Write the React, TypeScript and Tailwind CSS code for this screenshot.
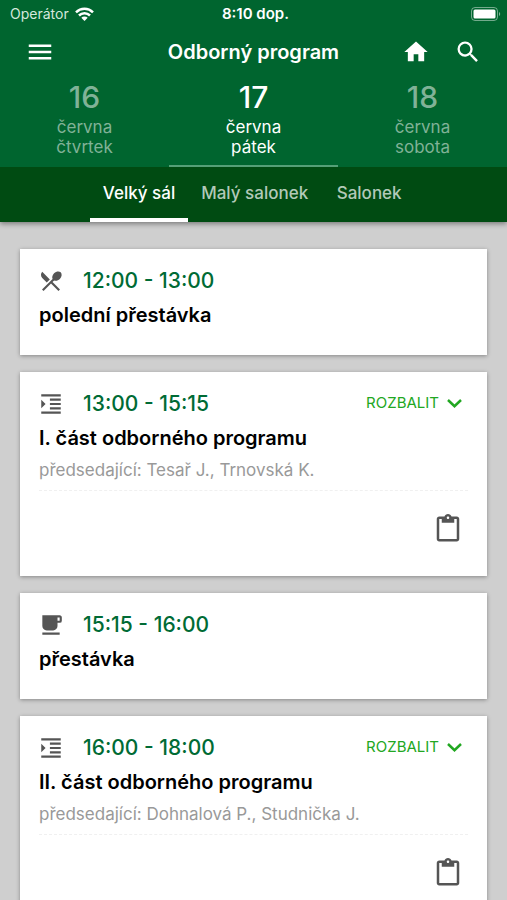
import { useState } from "react";
import type { IconType } from "react-icons";
import {
  MdContentPaste,
  MdFormatIndentIncrease,
  MdFreeBreakfast,
  MdHome,
  MdMenu,
  MdRestaurantMenu,
  MdSearch,
} from "react-icons/md";

type Session = {
  time: string;
  title: string;
  icon: IconType;
  chair?: string;
};

const days = [
  { date: "16", month: "června", weekday: "čtvrtek" },
  { date: "17", month: "června", weekday: "pátek" },
  { date: "18", month: "června", weekday: "sobota" },
];

const halls = ["Velký sál", "Malý salonek", "Salonek"];

const sessions: Session[] = [
  { time: "12:00 - 13:00", title: "polední přestávka", icon: MdRestaurantMenu },
  {
    time: "13:00 - 15:15",
    title: "I. část odborného programu",
    icon: MdFormatIndentIncrease,
    chair: "předsedající: Tesař J., Trnovská K.",
  },
  { time: "15:15 - 16:00", title: "přestávka", icon: MdFreeBreakfast },
  {
    time: "16:00 - 18:00",
    title: "II. část odborného programu",
    icon: MdFormatIndentIncrease,
    chair: "předsedající: Dohnalová P., Studnička J.",
  },
];

function StatusBar() {
  return (
    <div className="grid h-7 grid-cols-3 items-center pr-1.5 pl-2.5">
      <div className="flex items-center gap-1.5 text-sm text-[#d5e8dc]">
        <span>Operátor</span>
        <svg width="19" height="14" viewBox="0 0 19 14" aria-hidden="true">
          <g fill="none" stroke="#fff" strokeWidth="2.5">
            <path d="M1 5.3a12.2 12.2 0 0 1 17 0" />
            <path d="M4 8.5a7.8 7.8 0 0 1 11 0" />
          </g>
          <path d="M9.5 14 6.3 10.8a4.6 4.6 0 0 1 6.4 0Z" fill="#fff" />
        </svg>
      </div>
      <div className="text-center text-[15px] font-semibold">8:10 dop.</div>
      <svg className="justify-self-end" width="30" height="14" viewBox="0 0 30 14" aria-hidden="true">
        <rect x="0.5" y="0.5" width="26" height="13" rx="3.5" fill="none" stroke="#fff" strokeOpacity="0.45" />
        <rect x="2.5" y="2.5" width="22" height="9" rx="1.5" fill="#fff" />
        <path d="M28 5c1.6.7 1.6 3.3 0 4Z" fill="#fff" fillOpacity="0.5" />
      </svg>
    </div>
  );
}

function SessionCard({ session }: { session: Session }) {
  const Icon = session.icon;
  return (
    <article className="bg-white px-[19px] pt-4 shadow-[0_1px_4px_rgba(0,0,0,0.35)]">
      <div className="flex h-8 items-center">
        <Icon className="-ml-px size-[26px] text-[#555]" />
        <p className="ml-[19px] text-[21px] font-medium text-[#006b35]">{session.time}</p>
        {session.chair && (
          <button className="mr-1.5 ml-auto flex items-center gap-2 pb-0.5 text-[15px] text-[#22a722]">
            ROZBALIT
            <svg width="15" height="9" viewBox="0 0 15 9" aria-hidden="true">
              <path d="m1 1 6.5 6.2L14 1" fill="none" stroke="currentColor" strokeWidth="2.5" />
            </svg>
          </button>
        )}
      </div>
      <h2 className="text-xl/9 font-semibold text-black">{session.title}</h2>
      {session.chair ? (
        <>
          <p className="text-[17px]/7 text-[#999]">{session.chair}</p>
          <div className="mt-1.5 flex justify-end border-t border-dashed border-[#f0f0f0] pt-[23px] pb-8">
            <button aria-label="Poznámky">
              <MdContentPaste className="mr-[5px] size-[30px] text-[#555]" />
            </button>
          </div>
        </>
      ) : (
        <div className="h-[22px]" />
      )}
    </article>
  );
}

export default function App() {
  const [day, setDay] = useState(1);
  const [hall, setHall] = useState(0);

  return (
    <div className="h-screen overflow-hidden bg-[#cfcfcf] font-['Inter',sans-serif]">
      <header className="relative bg-[#00652f] text-white shadow-[0_2px_5px_rgba(0,0,0,0.4)]">
        <StatusBar />
        <div className="grid h-12 grid-cols-[1fr_auto_1fr] items-center px-[25px]">
          <button aria-label="Menu" className="justify-self-start">
            <MdMenu className="size-[30px]" />
          </button>
          <h1 className="text-xl font-semibold">Odborný program</h1>
          <div className="flex gap-6 justify-self-end">
            <button aria-label="Domů">
              <MdHome className="size-7" />
            </button>
            <button aria-label="Hledat">
              <MdSearch className="size-7" />
            </button>
          </div>
        </div>
        <nav aria-label="Dny" className="grid grid-cols-3">
          {days.map((d, i) => (
            <button
              key={d.date}
              onClick={() => setDay(i)}
              className={
                i === day
                  ? "flex h-[91px] flex-col items-center border-b-2 border-[#55a077] pt-px text-white"
                  : "flex h-[91px] flex-col items-center border-b-2 border-transparent pt-px text-[#80b297]"
              }
            >
              <span className="text-[30px]/10 font-medium">{d.date}</span>
              <span className="text-[17px]/5">{d.month}</span>
              <span className="text-[17px]/5">{d.weekday}</span>
            </button>
          ))}
        </nav>
        <nav aria-label="Sály" className="flex h-[55px] justify-center bg-[#004b12]">
          {halls.map((name, i) => (
            <button
              key={name}
              onClick={() => setHall(i)}
              className={
                i === hall
                  ? "min-w-24 border-b-4 border-white px-[13px] pt-0.5 text-[17px] font-medium text-white"
                  : "min-w-24 border-b-4 border-transparent px-[13px] pt-0.5 text-[17px] font-medium text-[#b2c9b8]"
              }
            >
              {name}
            </button>
          ))}
        </nav>
      </header>
      <main className="flex flex-col gap-[17px] px-5 pt-[27px]">
        {sessions.map((s) => (
          <SessionCard key={s.time} session={s} />
        ))}
      </main>
    </div>
  );
}
